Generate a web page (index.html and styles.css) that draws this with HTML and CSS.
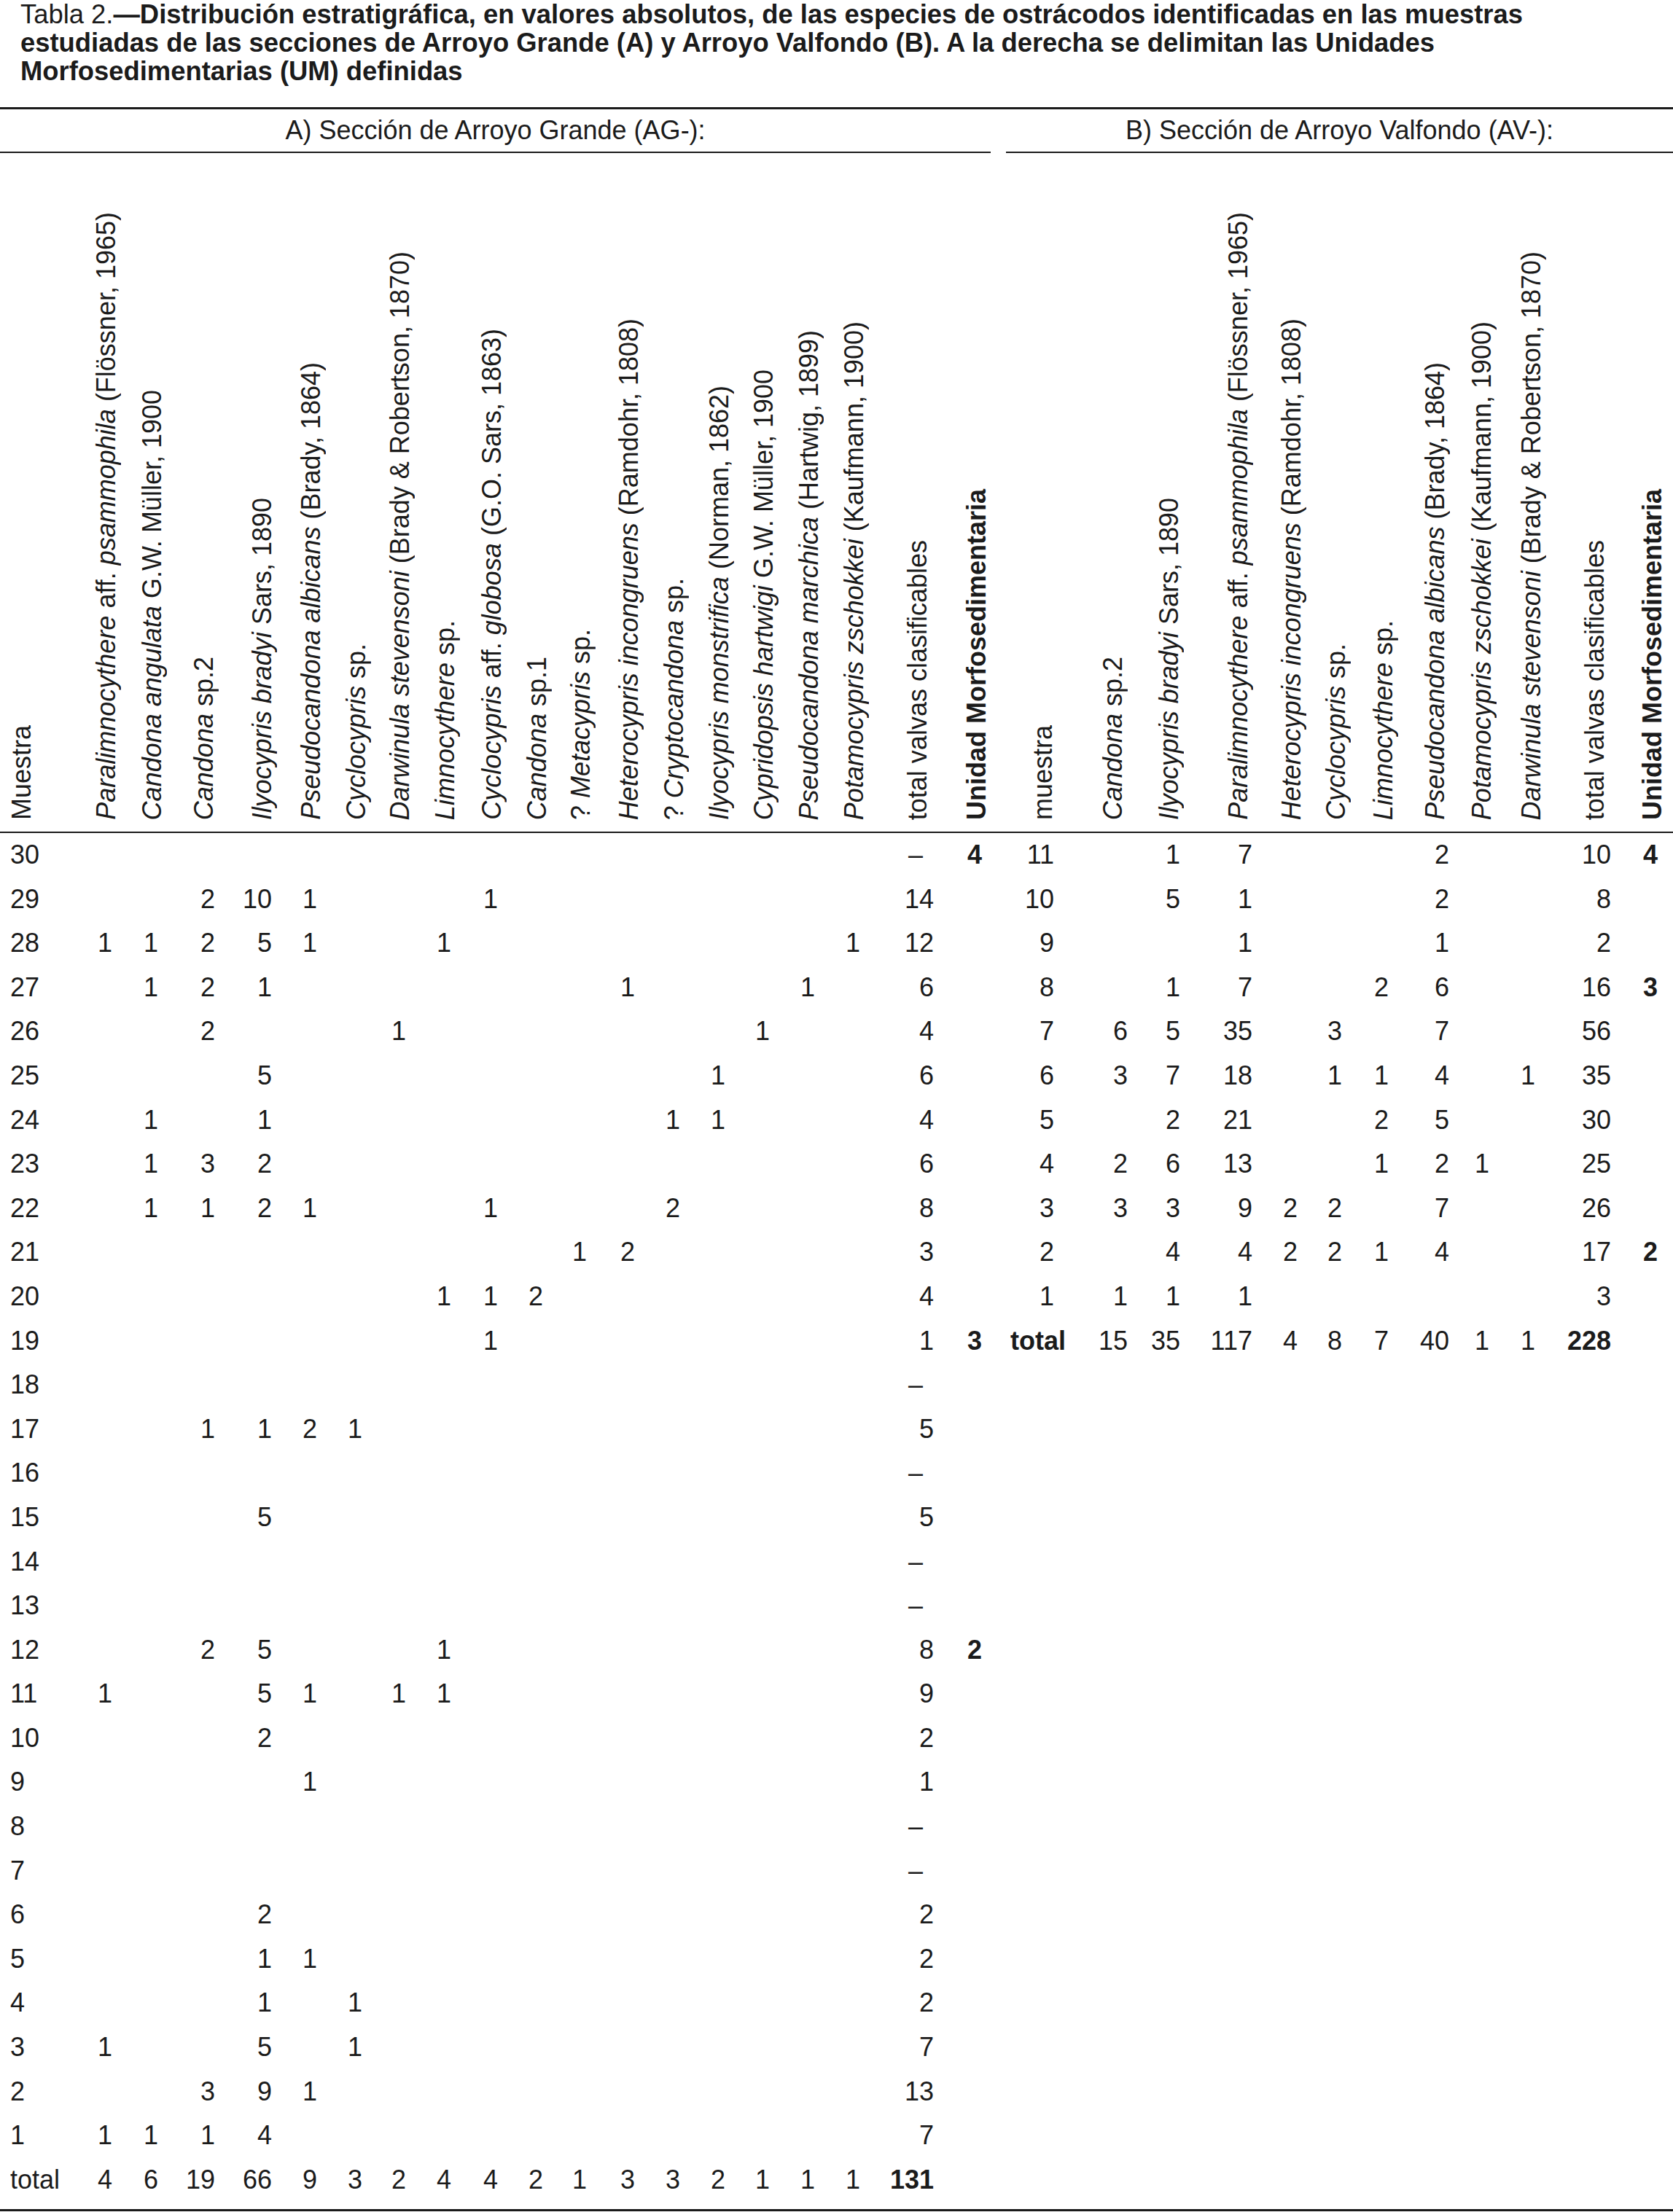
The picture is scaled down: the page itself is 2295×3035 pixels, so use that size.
FILE: index.html
```html
<!DOCTYPE html>
<html lang="es">
<head>
<meta charset="utf-8">
<title>Tabla 2</title>
<link rel="stylesheet" href="styles.css">
</head>
<body>
<div class="caption">Tabla 2.<b>—Distribución estratigráfica, en valores absolutos, de las especies de ostrácodos identificadas en las muestras<br>estudiadas de las secciones de Arroyo Grande (A) y Arroyo Valfondo (B). A la derecha se delimitan las Unidades<br>Morfosedimentarias (UM) definidas</b></div>
<div class="tbl">
  <div class="sections">
    <div class="sec sec-a">A) Sección de Arroyo Grande (AG-):</div>
    <div class="sec sec-b">B) Sección de Arroyo Valfondo (AV-):</div>
  </div>
  <div class="heads">
    <div class="hl">
      <div class="h hm"><span class="lab">Muestra</span></div>
      <div class="h"><span class="lab"><i>Paralimnocythere</i> aff. <i>psammophila</i> (Flössner, 1965)</span></div>
      <div class="h"><span class="lab"><i>Candona angulata</i> G.W. Müller, 1900</span></div>
      <div class="h"><span class="lab o-5"><i>Candona</i> sp.2</span></div>
      <div class="h"><span class="lab o-7"><i>Ilyocypris bradyi</i> Sars, 1890</span></div>
      <div class="h"><span class="lab"><i>Pseudocandona albicans</i> (Brady, 1864)</span></div>
      <div class="h"><span class="lab"><i>Cyclocypris</i> sp.</span></div>
      <div class="h"><span class="lab"><i>Darwinula stevensoni</i> (Brady &amp; Robertson, 1870)</span></div>
      <div class="h"><span class="lab"><i>Limnocythere</i> sp.</span></div>
      <div class="h"><span class="lab"><i>Cyclocypris</i> aff. <i>globosa</i> (G.O. Sars, 1863)</span></div>
      <div class="h"><span class="lab"><i>Candona</i> sp.1</span></div>
      <div class="h"><span class="lab">? <i>Metacypris</i> sp.</span></div>
      <div class="h"><span class="lab"><i>Heterocypris incongruens</i> (Ramdohr, 1808)</span></div>
      <div class="h"><span class="lab">? <i>Cryptocandona</i> sp.</span></div>
      <div class="h"><span class="lab"><i>Ilyocypris monstrifica</i> (Norman, 1862)</span></div>
      <div class="h"><span class="lab"><i>Cypridopsis hartwigi</i> G.W. Müller, 1900</span></div>
      <div class="h"><span class="lab"><i>Pseudocandona marchica</i> (Hartwig, 1899)</span></div>
      <div class="h"><span class="lab"><i>Potamocypris zschokkei</i> (Kaufmann, 1900)</span></div>
      <div class="h"><span class="lab o2">total valvas clasificables</span></div>
      <div class="h"><span class="lab o-13 strong">Unidad Morfosedimentaria</span></div>
    </div>
    <div class="hr">
      <div class="h"><span class="lab o-5">muestra</span></div>
      <div class="h"><span class="lab o0"><i>Candona</i> sp.2</span></div>
      <div class="h"><span class="lab o-5"><i>Ilyocypris bradyi</i> Sars, 1890</span></div>
      <div class="h"><span class="lab o-1"><i>Paralimnocythere</i> aff. <i>psammophila</i> (Flössner, 1965)</span></div>
      <div class="h"><span class="lab"><i>Heterocypris incongruens</i> (Ramdohr, 1808)</span></div>
      <div class="h"><span class="lab"><i>Cyclocypris</i> sp.</span></div>
      <div class="h"><span class="lab o-13"><i>Limnocythere</i> sp.</span></div>
      <div class="h"><span class="lab o-1"><i>Pseudocandona albicans</i> (Brady, 1864)</span></div>
      <div class="h"><span class="lab o-10"><i>Potamocypris zschokkei</i> (Kaufmann, 1900)</span></div>
      <div class="h"><span class="lab o-15"><i>Darwinula stevensoni</i> (Brady &amp; Robertson, 1870)</span></div>
      <div class="h"><span class="lab o2">total valvas clasificables</span></div>
      <div class="h"><span class="lab o-13 strong">Unidad Morfosedimentaria</span></div>
    </div>
  </div>
  <div class="body">
    <div class="bl">
      <div class="r"><span class="m">30</span><span class="t dash">–</span><span class="u">4</span></div>
      <div class="r"><span class="m">29</span><span class="k3">2</span><span class="k4">10</span><span class="k5">1</span><span class="k9">1</span><span class="t">14</span></div>
      <div class="r"><span class="m">28</span><span class="k1">1</span><span class="k2">1</span><span class="k3">2</span><span class="k4">5</span><span class="k5">1</span><span class="k8">1</span><span class="k17">1</span><span class="t">12</span></div>
      <div class="r"><span class="m">27</span><span class="k2">1</span><span class="k3">2</span><span class="k4">1</span><span class="k12">1</span><span class="k16">1</span><span class="t">6</span></div>
      <div class="r"><span class="m">26</span><span class="k3">2</span><span class="k7">1</span><span class="k15">1</span><span class="t">4</span></div>
      <div class="r"><span class="m">25</span><span class="k4">5</span><span class="k14">1</span><span class="t">6</span></div>
      <div class="r"><span class="m">24</span><span class="k2">1</span><span class="k4">1</span><span class="k13">1</span><span class="k14">1</span><span class="t">4</span></div>
      <div class="r"><span class="m">23</span><span class="k2">1</span><span class="k3">3</span><span class="k4">2</span><span class="t">6</span></div>
      <div class="r"><span class="m">22</span><span class="k2">1</span><span class="k3">1</span><span class="k4">2</span><span class="k5">1</span><span class="k9">1</span><span class="k13">2</span><span class="t">8</span></div>
      <div class="r"><span class="m">21</span><span class="k11">1</span><span class="k12">2</span><span class="t">3</span></div>
      <div class="r"><span class="m">20</span><span class="k8">1</span><span class="k9">1</span><span class="k10">2</span><span class="t">4</span></div>
      <div class="r"><span class="m">19</span><span class="k9">1</span><span class="t">1</span><span class="u">3</span></div>
      <div class="r"><span class="m">18</span><span class="t dash">–</span></div>
      <div class="r"><span class="m">17</span><span class="k3">1</span><span class="k4">1</span><span class="k5">2</span><span class="k6">1</span><span class="t">5</span></div>
      <div class="r"><span class="m">16</span><span class="t dash">–</span></div>
      <div class="r"><span class="m">15</span><span class="k4">5</span><span class="t">5</span></div>
      <div class="r"><span class="m">14</span><span class="t dash">–</span></div>
      <div class="r"><span class="m">13</span><span class="t dash">–</span></div>
      <div class="r"><span class="m">12</span><span class="k3">2</span><span class="k4">5</span><span class="k8">1</span><span class="t">8</span><span class="u">2</span></div>
      <div class="r"><span class="m">11</span><span class="k1">1</span><span class="k4">5</span><span class="k5">1</span><span class="k7">1</span><span class="k8">1</span><span class="t">9</span></div>
      <div class="r"><span class="m">10</span><span class="k4">2</span><span class="t">2</span></div>
      <div class="r"><span class="m">9</span><span class="k5">1</span><span class="t">1</span></div>
      <div class="r"><span class="m">8</span><span class="t dash">–</span></div>
      <div class="r"><span class="m">7</span><span class="t dash">–</span></div>
      <div class="r"><span class="m">6</span><span class="k4">2</span><span class="t">2</span></div>
      <div class="r"><span class="m">5</span><span class="k4">1</span><span class="k5">1</span><span class="t">2</span></div>
      <div class="r"><span class="m">4</span><span class="k4">1</span><span class="k6">1</span><span class="t">2</span></div>
      <div class="r"><span class="m">3</span><span class="k1">1</span><span class="k4">5</span><span class="k6">1</span><span class="t">7</span></div>
      <div class="r"><span class="m">2</span><span class="k3">3</span><span class="k4">9</span><span class="k5">1</span><span class="t">13</span></div>
      <div class="r"><span class="m">1</span><span class="k1">1</span><span class="k2">1</span><span class="k3">1</span><span class="k4">4</span><span class="t">7</span></div>
      <div class="r"><span class="m">total</span><span class="k1">4</span><span class="k2">6</span><span class="k3">19</span><span class="k4">66</span><span class="k5">9</span><span class="k6">3</span><span class="k7">2</span><span class="k8">4</span><span class="k9">4</span><span class="k10">2</span><span class="k11">1</span><span class="k12">3</span><span class="k13">3</span><span class="k14">2</span><span class="k15">1</span><span class="k16">1</span><span class="k17">1</span><span class="t strong">131</span></div>
    </div>
    <div class="br">
      <div class="r"><span class="m">11</span><span class="q2">1</span><span class="q3">7</span><span class="q7">2</span><span class="t">10</span><span class="u">4</span></div>
      <div class="r"><span class="m">10</span><span class="q2">5</span><span class="q3">1</span><span class="q7">2</span><span class="t">8</span></div>
      <div class="r"><span class="m">9</span><span class="q3">1</span><span class="q7">1</span><span class="t">2</span></div>
      <div class="r"><span class="m">8</span><span class="q2">1</span><span class="q3">7</span><span class="q6">2</span><span class="q7">6</span><span class="t">16</span><span class="u">3</span></div>
      <div class="r"><span class="m">7</span><span class="q1">6</span><span class="q2">5</span><span class="q3">35</span><span class="q5">3</span><span class="q7">7</span><span class="t">56</span></div>
      <div class="r"><span class="m">6</span><span class="q1">3</span><span class="q2">7</span><span class="q3">18</span><span class="q5">1</span><span class="q6">1</span><span class="q7">4</span><span class="q9">1</span><span class="t">35</span></div>
      <div class="r"><span class="m">5</span><span class="q2">2</span><span class="q3">21</span><span class="q6">2</span><span class="q7">5</span><span class="t">30</span></div>
      <div class="r"><span class="m">4</span><span class="q1">2</span><span class="q2">6</span><span class="q3">13</span><span class="q6">1</span><span class="q7">2</span><span class="q8">1</span><span class="t">25</span></div>
      <div class="r"><span class="m">3</span><span class="q1">3</span><span class="q2">3</span><span class="q3">9</span><span class="q4">2</span><span class="q5">2</span><span class="q7">7</span><span class="t">26</span></div>
      <div class="r"><span class="m">2</span><span class="q2">4</span><span class="q3">4</span><span class="q4">2</span><span class="q5">2</span><span class="q6">1</span><span class="q7">4</span><span class="t">17</span><span class="u">2</span></div>
      <div class="r"><span class="m">1</span><span class="q1">1</span><span class="q2">1</span><span class="q3">1</span><span class="t">3</span></div>
      <div class="r"><span class="m tot">total</span><span class="q1">15</span><span class="q2">35</span><span class="q3">117</span><span class="q4">4</span><span class="q5">8</span><span class="q6">7</span><span class="q7">40</span><span class="q8">1</span><span class="q9">1</span><span class="t strong">228</span></div>
    </div>
  </div>
</div>
</body>
</html>
```

FILE: styles.css
```css
html, body {
  margin: 0;
  padding: 0;
  background: #ffffff;
}

body {
  font-family: "Liberation Sans", Arial, Helvetica, sans-serif;
  color: #1b1b1b;
  font-size: 36px;
}

.caption {
  font-size: 36.4px;
  line-height: 39px;
  padding-left: 28px;
  white-space: nowrap;
  height: 147px;
  box-sizing: border-box;
}

.caption b {
  font-weight: 700;
}

.tbl {
  border-top: 3px solid #1b1b1b;
  border-bottom: 3px solid #1b1b1b;
  padding-bottom: 10px;
}

.sections {
  display: flex;
  gap: 21px;
}

.sec {
  height: 58px;
  line-height: 58px;
  text-align: center;
  white-space: nowrap;
  border-bottom: 2px solid #1b1b1b;
}

.sec-a {
  width: 1359px;
}

.sec-b {
  flex: 1;
}

.heads {
  display: flex;
  height: 931px;
  border-bottom: 2px solid #1b1b1b;
}

.hl,
.bl .r {
  display: grid;
  grid-template-columns: 80px 74px 63px 78px 78px 62px 62px 60px 62px 64px 62px 60px 66px 62px 62px 61px 62px 62px 101px 66px;
}

.hr,
.br .r {
  display: grid;
  grid-template-columns: 99px 101px 72px 99px 62px 61px 64px 83px 55px 63px 104px 64px;
}

.hl, .hr {
  height: 100%;
}

.h {
  display: flex;
  align-items: flex-end;
  justify-content: flex-end;
  padding-bottom: 16px;
  min-width: 0;
}

.h.hm {
  justify-content: flex-start;
}

.lab {
  writing-mode: vertical-rl;
  transform: rotate(180deg);
  line-height: 40px;
  white-space: nowrap;
  font-size: 36px;
  margin-right: -12px;
  flex: none;
}

.hm .lab {
  margin-right: 0;
  margin-left: 10px;
}

.lab.o-5 { margin-right: -5px; }
.lab.o-7 { margin-right: -7px; }
.lab.o-1 { margin-right: -1px; }
.lab.o0 { margin-right: 0; }
.lab.o2 { margin-right: 2px; }
.lab.o-10 { margin-right: -10px; }
.lab.o-13 { margin-right: -13px; }
.lab.o-15 { margin-right: -15px; }

.strong {
  font-weight: 700;
}

.body {
  display: flex;
  align-items: flex-start;
}

.bl {
  width: 1347px;
}

.br {
  width: 927px;
}

.r {
  height: 60.6px;
  line-height: 60.6px;
  white-space: nowrap;
}

.r span {
  grid-row: 1;
  text-align: right;
}

.r .m {
  grid-column: 1;
}

.bl .m {
  text-align: left;
  padding-left: 14px;
}

.br .tot {
  font-weight: 700;
  margin-right: -16px;
}

.k1 { grid-column: 2; }
.k2 { grid-column: 3; }
.k3 { grid-column: 4; }
.k4 { grid-column: 5; }
.k5 { grid-column: 6; }
.k6 { grid-column: 7; }
.k7 { grid-column: 8; }
.k8 { grid-column: 9; }
.k9 { grid-column: 10; }
.k10 { grid-column: 11; }
.k11 { grid-column: 12; }
.k12 { grid-column: 13; }
.k13 { grid-column: 14; }
.k14 { grid-column: 15; }
.k15 { grid-column: 16; }
.k16 { grid-column: 17; }
.k17 { grid-column: 18; }
.bl .t { grid-column: 19; }
.bl .u { grid-column: 20; font-weight: 700; }

.q1 { grid-column: 2; }
.q2 { grid-column: 3; }
.q3 { grid-column: 4; }
.q4 { grid-column: 5; }
.q5 { grid-column: 6; }
.q6 { grid-column: 7; }
.q7 { grid-column: 8; }
.q8 { grid-column: 9; }
.q9 { grid-column: 10; }
.br .t { grid-column: 11; }
.br .u { grid-column: 12; font-weight: 700; }

.r .dash {
  padding-right: 15px;
}
```
